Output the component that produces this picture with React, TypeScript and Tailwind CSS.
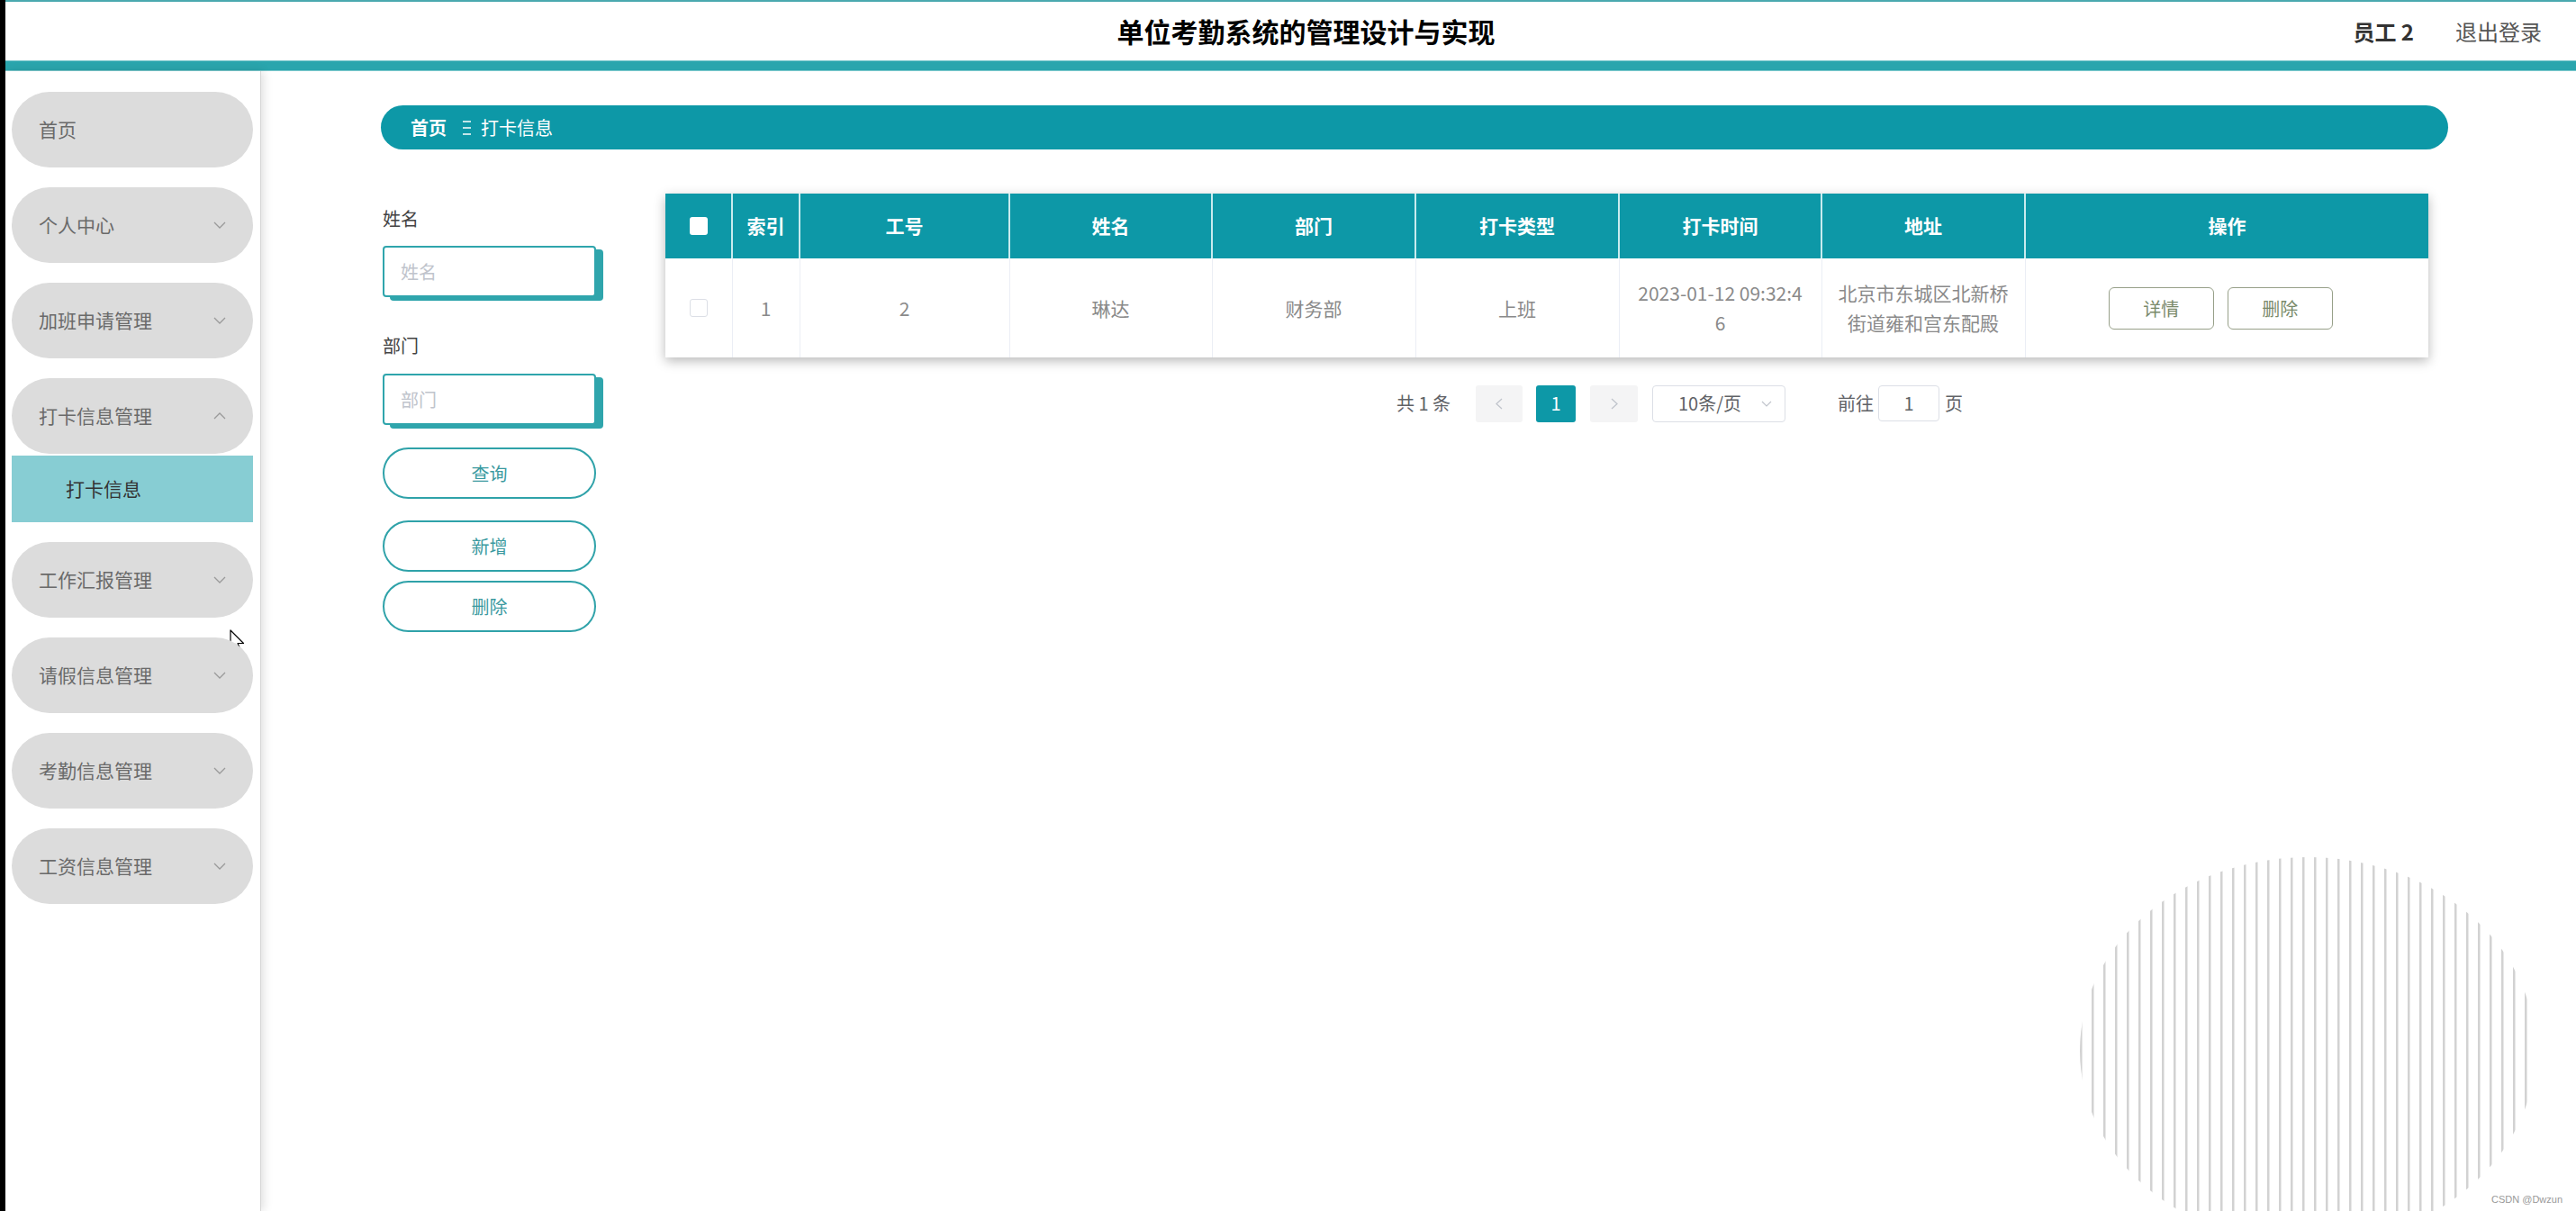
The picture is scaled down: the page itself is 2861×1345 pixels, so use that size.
import React from 'react';

function Chevron({ up }: { up?: boolean }) {
  return (
    <svg width="14" height="8" viewBox="0 0 14 8" className={up ? 'rotate-180' : ''}>
      <polyline points="1,1 7,7 13,1" fill="none" stroke="#9a9a9a" strokeWidth="1.3" />
    </svg>
  );
}

const menus = [
  { label: '首页', chev: false, open: false },
  { label: '个人中心', chev: true, open: false },
  { label: '加班申请管理', chev: true, open: false },
  { label: '打卡信息管理', chev: true, open: true },
  { label: '工作汇报管理', chev: true, open: false },
  { label: '请假信息管理', chev: true, open: false },
  { label: '考勤信息管理', chev: true, open: false },
  { label: '工资信息管理', chev: true, open: false },
];

const headers = ['索引', '工号', '姓名', '部门', '打卡类型', '打卡时间', '地址', '操作'];
const widths = [74, 75, 233, 225, 226, 226, 225, 226, 448];

export default function App() {
  return (
    <div className="relative flex h-[1345px] w-[2861px] overflow-hidden bg-white font-['Noto_Sans_CJK_SC',sans-serif]">
      <div className="w-[6px] shrink-0 bg-black" />
      <div className="flex min-w-0 flex-1 flex-col">
        <div className="h-[2px] bg-[#4aa9af]" />
        <header className="grid h-[65px] grid-cols-[1fr_auto_1fr] items-center">
          <div />
          <h1 className="pl-[34px] text-[30px] font-bold text-black">单位考勤系统的管理设计与实现</h1>
          <div className="flex items-center justify-end gap-[46px] pr-[38px] text-[24px]">
            <span className="font-bold text-[#333]">员工 2</span>
            <span className="text-[#555]">退出登录</span>
          </div>
        </header>
        <div className="h-[12px] border-y border-[#7cc8cc] bg-[#2aa5ad]" />
        <div className="flex flex-1">
          <aside className="z-10 w-[284px] shrink-0 border-r border-[#d6d6d6] pl-[7px] pr-[8px] pt-[1px] shadow-[3px_0_10px_rgba(0,0,0,0.12)]">
            {menus.map((m) => (
              <div key={m.label}>
                <div className="mt-[22px] flex h-[84px] items-center justify-between rounded-full bg-[#dcdcdc] px-[30px] text-[21px] text-[#6a6a6a]">
                  <span>{m.label}</span>
                  {m.chev && <Chevron up={m.open} />}
                </div>
                {m.open && (
                  <div className="mb-[1px] mt-[2px] flex h-[74px] items-center bg-[#87cdd3] pl-[60px] text-[21px] text-[#333]">
                    打卡信息
                  </div>
                )}
              </div>
            ))}
          </aside>
          <main className="flex-1 pl-[133px] pr-[142px] pt-[38px]">
            <div className="flex h-[49px] items-center rounded-full bg-[#0d98a7] pl-[33px] text-[20px] text-white">
              <span className="font-bold">首页</span>
              <svg width="11" height="18" viewBox="0 0 11 18" className="ml-[17px] mr-[10px]">
                <line x1="1" y1="2" x2="10" y2="2" stroke="white" strokeWidth="1.5" />
                <line x1="1" y1="9" x2="10" y2="9" stroke="white" strokeWidth="1.5" />
                <line x1="1" y1="16" x2="10" y2="16" stroke="white" strokeWidth="1.5" />
              </svg>
              <span>打卡信息</span>
            </div>
            <div className="mt-[49px] flex">
              <div className="ml-[2px] w-[237px] shrink-0">
                <div className="mt-[14px] h-[28px] text-[20px] leading-[28px] text-[#444]">姓名</div>
                <div className="mt-[16px] flex h-[57px] items-center rounded-[4px] border-2 border-[#2fa5ac] bg-white pl-[18px] text-[20px] text-[#c0c4cc] shadow-[8px_4px_0_0_#2fa5ac]">
                  姓名
                </div>
                <div className="mt-[40px] h-[28px] text-[20px] leading-[28px] text-[#444]">部门</div>
                <div className="mt-[17px] flex h-[57px] items-center rounded-[4px] border-2 border-[#2fa5ac] bg-white pl-[18px] text-[20px] text-[#c0c4cc] shadow-[8px_4px_0_0_#2fa5ac]">
                  部门
                </div>
                <button className="mt-[25px] flex h-[57px] w-full items-center justify-center rounded-full border-2 border-[#2fa2a9] bg-white text-[20px] text-[#3b9aa0]">
                  查询
                </button>
                <button className="mt-[24px] flex h-[57px] w-full items-center justify-center rounded-full border-2 border-[#2fa2a9] bg-white text-[20px] text-[#3b9aa0]">
                  新增
                </button>
                <button className="mt-[10px] flex h-[57px] w-full items-center justify-center rounded-full border-2 border-[#2fa2a9] bg-white text-[20px] text-[#3b9aa0]">
                  删除
                </button>
              </div>
              <div className="ml-[77px] w-[1958px] shrink-0">
                <div className="shadow-[0_4px_12px_rgba(0,0,0,0.28)]">
                  <table className="w-[1958px] table-fixed border-collapse">
                    <colgroup>
                      {widths.map((w, i) => (
                        <col key={i} style={{ width: w }} />
                      ))}
                    </colgroup>
                    <thead>
                      <tr className="h-[72px] bg-[#0d98a7] text-[21px] font-bold text-white">
                        <th>
                          <div className="mx-auto h-[20px] w-[20px] rounded-[3px] bg-white" />
                        </th>
                        {headers.map((h) => (
                          <th key={h} className="border-l-2 border-[#c8ebee] font-bold">
                            {h}
                          </th>
                        ))}
                      </tr>
                    </thead>
                    <tbody>
                      <tr className="h-[110px] text-center text-[21px] leading-[33px] text-[#8a8a8a]">
                        <td>
                          <div className="mx-auto h-[20px] w-[20px] rounded-[3px] border border-[#dcdfe6] bg-white" />
                        </td>
                        <td className="border-l border-[#ebeef5]">1</td>
                        <td className="border-l border-[#ebeef5]">2</td>
                        <td className="border-l border-[#ebeef5]">琳达</td>
                        <td className="border-l border-[#ebeef5]">财务部</td>
                        <td className="border-l border-[#ebeef5]">上班</td>
                        <td className="border-l border-[#ebeef5] px-[8px]">
                          2023-01-12 09:32:4
                          <br />6
                        </td>
                        <td className="border-l border-[#ebeef5]">
                          北京市东城区北新桥
                          <br />
                          街道雍和宫东配殿
                        </td>
                        <td className="border-l border-[#ebeef5]">
                          <div className="flex justify-center gap-[15px] pr-[14px]">
                            <button className="h-[47px] w-[117px] rounded-[6px] border-[1.5px] border-[#97a089] bg-white text-[20px] text-[#7a8a6a]">
                              详情
                            </button>
                            <button className="h-[47px] w-[117px] rounded-[6px] border-[1.5px] border-[#97a089] bg-white text-[20px] text-[#7a8a6a]">
                              删除
                            </button>
                          </div>
                        </td>
                      </tr>
                    </tbody>
                  </table>
                </div>
                <div className="mt-[30px] flex h-[42px] items-center pl-[812px] text-[20px] text-[#606266]">
                  <span className="w-[66px] whitespace-nowrap">共 1 条</span>
                  <div className="ml-[22px] flex h-[41px] w-[52px] items-center justify-center rounded-[3px] bg-[#f4f4f5]">
                    <svg width="8" height="13" viewBox="0 0 8 13">
                      <polyline points="7,1 1,6.5 7,12" fill="none" stroke="#c0c4cc" strokeWidth="1.3" />
                    </svg>
                  </div>
                  <div className="ml-[15px] flex h-[41px] w-[44px] items-center justify-center rounded-[3px] bg-[#0d98a7] text-white">
                    1
                  </div>
                  <div className="ml-[16px] flex h-[41px] w-[53px] items-center justify-center rounded-[3px] bg-[#f4f4f5]">
                    <svg width="8" height="13" viewBox="0 0 8 13">
                      <polyline points="1,1 7,6.5 1,12" fill="none" stroke="#c0c4cc" strokeWidth="1.3" />
                    </svg>
                  </div>
                  <div className="ml-[16px] flex h-[41px] w-[148px] items-center justify-between rounded-[4px] border border-[#dcdfe6] pl-[28px] pr-[14px]">
                    <span>10条/页</span>
                    <svg width="12" height="7" viewBox="0 0 12 7">
                      <polyline points="1,1 6,6 11,1" fill="none" stroke="#c0c4cc" strokeWidth="1.2" />
                    </svg>
                  </div>
                  <span className="ml-[58px]">前往</span>
                  <div className="ml-[5px] flex h-[40px] w-[68px] items-center justify-center rounded-[4px] border border-[#dcdfe6]">
                    1
                  </div>
                  <span className="ml-[6px]">页</span>
                </div>
              </div>
            </div>
          </main>
        </div>
      </div>

      <svg className="absolute left-[2310px] top-[952px]" width="506" height="430" viewBox="0 0 506 430">
        <defs>
          <pattern id="stripes" x="0" y="0" width="13" height="430" patternUnits="userSpaceOnUse">
            <rect x="0" y="0" width="2.5" height="430" fill="#d2d2d2" />
          </pattern>
        </defs>
        <ellipse cx="253" cy="215" rx="253" ry="215" fill="url(#stripes)" />
      </svg>

      <span className="absolute bottom-[5px] right-[15px] font-['Liberation_Sans',sans-serif] text-[11px] text-[#999]">
        CSDN @Dwzun
      </span>

      <svg className="absolute left-[255px] top-[699px]" width="18" height="27" viewBox="0 0 18 27">
        <path d="M1 1 L1 21 L6 16.5 L9.5 25 L12.5 23.8 L9 15.5 L15.5 15.5 Z" fill="white" stroke="black" strokeWidth="1.2" strokeLinejoin="round" />
      </svg>
    </div>
  );
}
